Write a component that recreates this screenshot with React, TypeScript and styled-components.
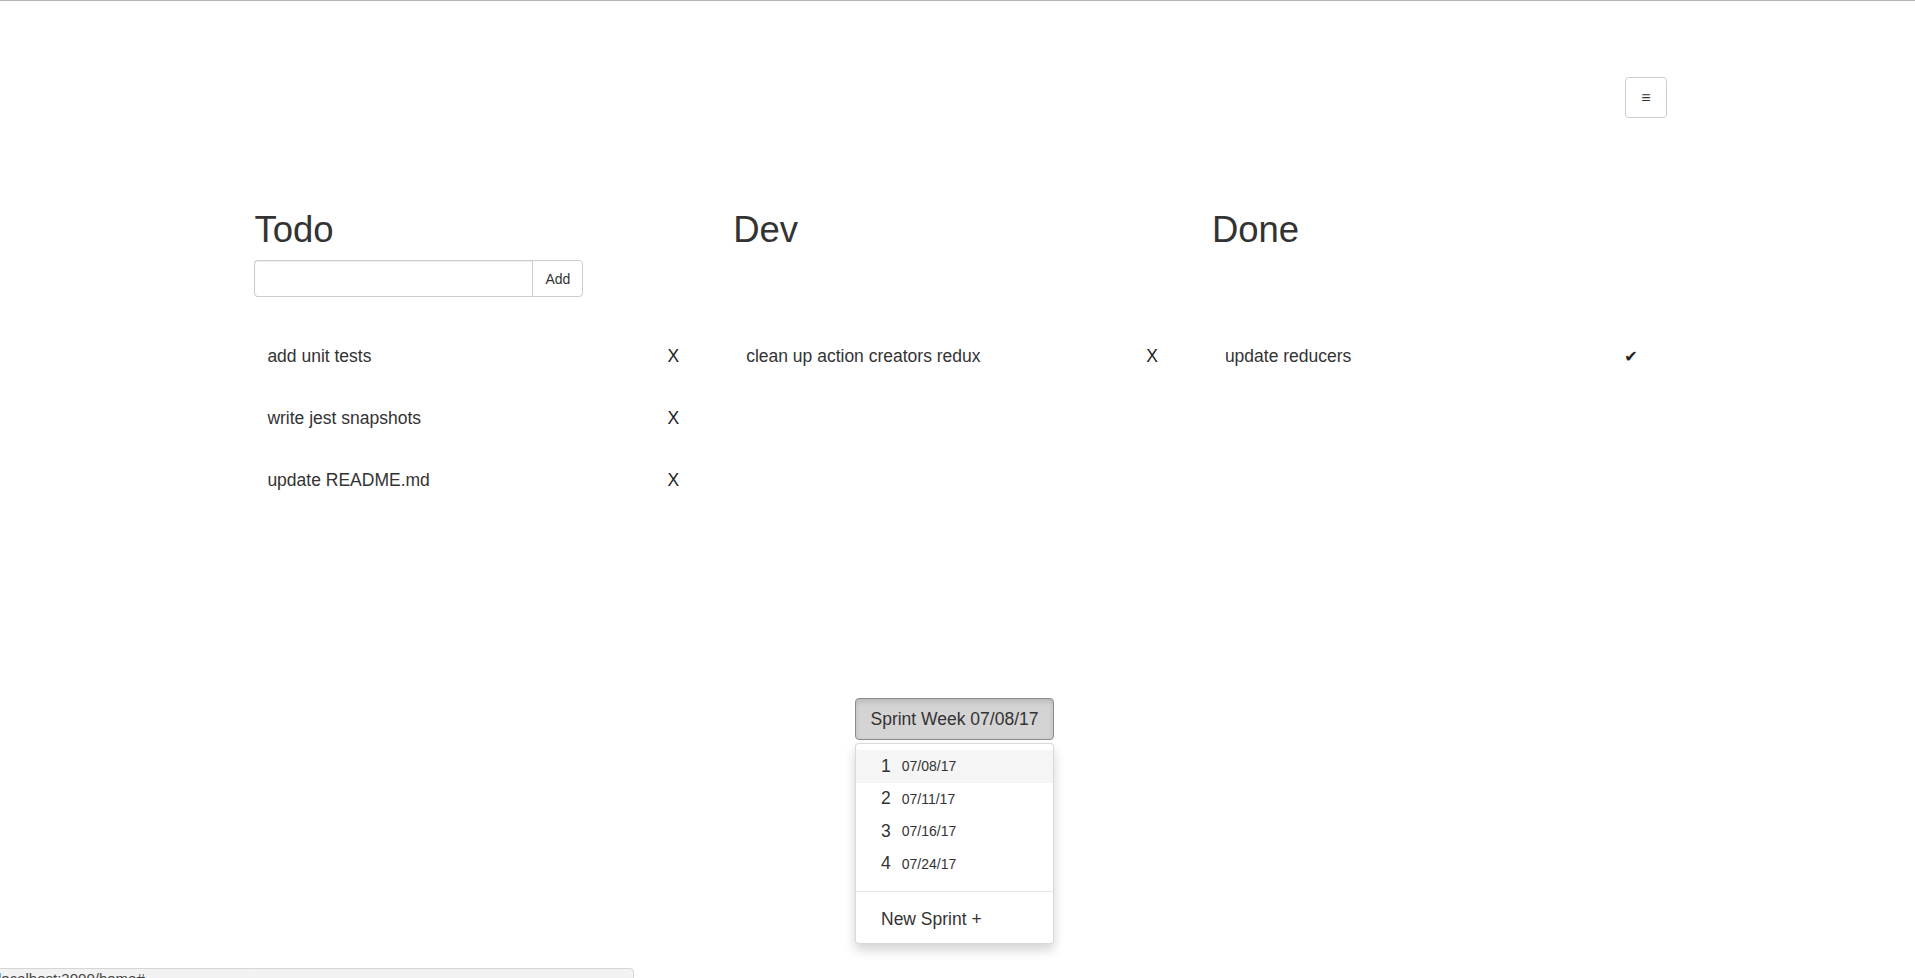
import React from "react";
import styled, { createGlobalStyle } from "styled-components";

const GlobalStyle = createGlobalStyle`
  html, body {
    margin: 0;
    padding: 0;
    background: #fff;
  }
  body {
    font-family: "Liberation Sans", Arial, Helvetica, sans-serif;
    color: #333;
    font-size: 14px;
  }
  * { box-sizing: border-box; }
`;

const Page = styled.div`
  border-top: 1px solid #b3b3b3;
  min-height: 977px;
`;

const TopBar = styled.div`
  display: flex;
  justify-content: flex-end;
  padding: 76px 248px 0 0;
`;

const MenuToggle = styled.button`
  width: 42px;
  height: 41px;
  border: 1px solid #ccc;
  border-radius: 4px;
  background: #fff;
  color: #333;
  font-family: "Liberation Sans", Arial, sans-serif;
  font-size: 16px;
  line-height: 1;
  padding: 0;
  display: flex;
  align-items: center;
  justify-content: center;
  cursor: pointer;
`;

const Board = styled.div`
  width: 75%;
  margin: 92px auto 0;
  padding: 0 15px;
  display: grid;
  grid-template-columns: repeat(3, 1fr);
  column-gap: 30px;
`;

const Column = styled.section`
  display: flex;
  flex-direction: column;
`;

const Heading = styled.h1`
  margin: 0;
  font-size: 36.5px;
  line-height: 40px;
  font-weight: 500;
  color: #333;
`;

const FormSlot = styled.div`
  height: 37px;
  margin-top: 10px;
  display: flex;
`;

const TextInput = styled.input`
  width: 278px;
  height: 37px;
  border: 1px solid #ccc;
  border-right: none;
  border-radius: 4px 0 0 4px;
  box-shadow: inset 0 1px 1px rgba(0, 0, 0, 0.075);
  padding: 6px 12px;
  font-size: 14px;
  font-family: inherit;
  outline: none;
`;

const AddButton = styled.button`
  width: 51px;
  height: 37px;
  border: 1px solid #ccc;
  border-radius: 0 4px 4px 0;
  background: #fff;
  color: #333;
  font-size: 14px;
  font-family: inherit;
  padding: 0;
  cursor: pointer;
`;

const TaskList = styled.ul`
  list-style: none;
  margin: 28px 0 0;
  padding: 0;
`;

const TaskRow = styled.li`
  height: 62px;
  display: flex;
  align-items: center;
  justify-content: space-between;
  padding: 0 24px 0 13px;
  font-size: 17.5px;
  color: #333;
`;

const TaskAction = styled.span<{ $done?: boolean }>`
  font-size: ${(p) => (p.$done ? "16px" : "17.5px")};
  font-family: ${(p) =>
    p.$done ? '"DejaVu Sans", sans-serif' : '"Liberation Sans", Arial, sans-serif'};
  color: #222;
  margin-right: ${(p) => (p.$done ? "-1px" : "0")};
  cursor: pointer;
`;

const SprintArea = styled.div`
  margin-top: 187px;
  display: flex;
  justify-content: center;
  padding-right: 6px;
`;

const SprintDropdown = styled.div`
  position: relative;
  width: 199px;
`;

const SprintButton = styled.button`
  width: 199px;
  height: 42px;
  background: #d4d4d4;
  border: 1px solid #8c8c8c;
  border-radius: 4px;
  box-shadow: inset 0 3px 5px rgba(0, 0, 0, 0.125);
  color: #333;
  font-family: inherit;
  font-size: 17.5px;
  white-space: nowrap;
  padding: 0;
  cursor: pointer;
`;

const SprintMenu = styled.ul`
  position: absolute;
  top: 45px;
  left: 0;
  width: 199px;
  list-style: none;
  margin: 0;
  padding: 6px 0 5px;
  background: #fff;
  border: 1px solid rgba(0, 0, 0, 0.15);
  border-radius: 4px;
  box-shadow: 0 6px 12px rgba(0, 0, 0, 0.175);
`;

const SprintItem = styled.li<{ $active?: boolean; $tall?: boolean }>`
  height: ${(p) => (p.$tall ? "37px" : "32.5px")};
  display: flex;
  align-items: center;
  padding-left: 25px;
  background: ${(p) => (p.$active ? "#f5f5f5" : "transparent")};
  font-size: 17.5px;
  color: #333;
  cursor: pointer;
`;

const SprintDate = styled.span`
  font-size: 14px;
  margin-left: 11px;
`;

const Divider = styled.li`
  height: 1px;
  margin: 11px 0 9px;
  background: #e5e5e5;
`;

const StatusBubble = styled.div`
  position: fixed;
  left: -1px;
  bottom: -12px;
  width: 635px;
  height: 22px;
  background: #f2f2f2;
  border: 1px solid #d6d6d6;
  border-top-right-radius: 4px;
  font-family: "Liberation Sans", Arial, sans-serif;
  font-size: 15px;
  color: #444;
  line-height: 20px;
  padding-left: 0;
  text-indent: -2px;
  white-space: nowrap;
  overflow: hidden;
`;

type ColumnData = {
  title: string;
  hasForm?: boolean;
  done?: boolean;
  tasks: string[];
};

const columns: ColumnData[] = [
  {
    title: "Todo",
    hasForm: true,
    tasks: ["add unit tests", "write jest snapshots", "update README.md"],
  },
  { title: "Dev", tasks: ["clean up action creators redux"] },
  { title: "Done", done: true, tasks: ["update reducers"] },
];

const sprints = [
  { n: 1, date: "07/08/17" },
  { n: 2, date: "07/11/17" },
  { n: 3, date: "07/16/17" },
  { n: 4, date: "07/24/17" },
];

export default function App() {
  return (
    <Page>
      <GlobalStyle />
      <TopBar>
        <MenuToggle aria-label="menu">≡</MenuToggle>
      </TopBar>
      <Board>
        {columns.map((col) => (
          <Column key={col.title}>
            <Heading>{col.title}</Heading>
            <FormSlot>
              {col.hasForm && (
                <>
                  <TextInput type="text" />
                  <AddButton>Add</AddButton>
                </>
              )}
            </FormSlot>
            <TaskList>
              {col.tasks.map((t) => (
                <TaskRow key={t}>
                  <span>{t}</span>
                  <TaskAction $done={col.done}>{col.done ? "✔" : "X"}</TaskAction>
                </TaskRow>
              ))}
            </TaskList>
          </Column>
        ))}
      </Board>
      <SprintArea>
        <SprintDropdown>
          <SprintButton>Sprint Week 07/08/17</SprintButton>
          <SprintMenu>
            {sprints.map((s) => (
              <SprintItem key={s.n} $active={s.n === 1}>
                {s.n}
                <SprintDate>{s.date}</SprintDate>
              </SprintItem>
            ))}
            <Divider />
            <SprintItem $tall>New Sprint +</SprintItem>
          </SprintMenu>
        </SprintDropdown>
      </SprintArea>
      <StatusBubble>localhost:3000/home#</StatusBubble>
    </Page>
  );
}
